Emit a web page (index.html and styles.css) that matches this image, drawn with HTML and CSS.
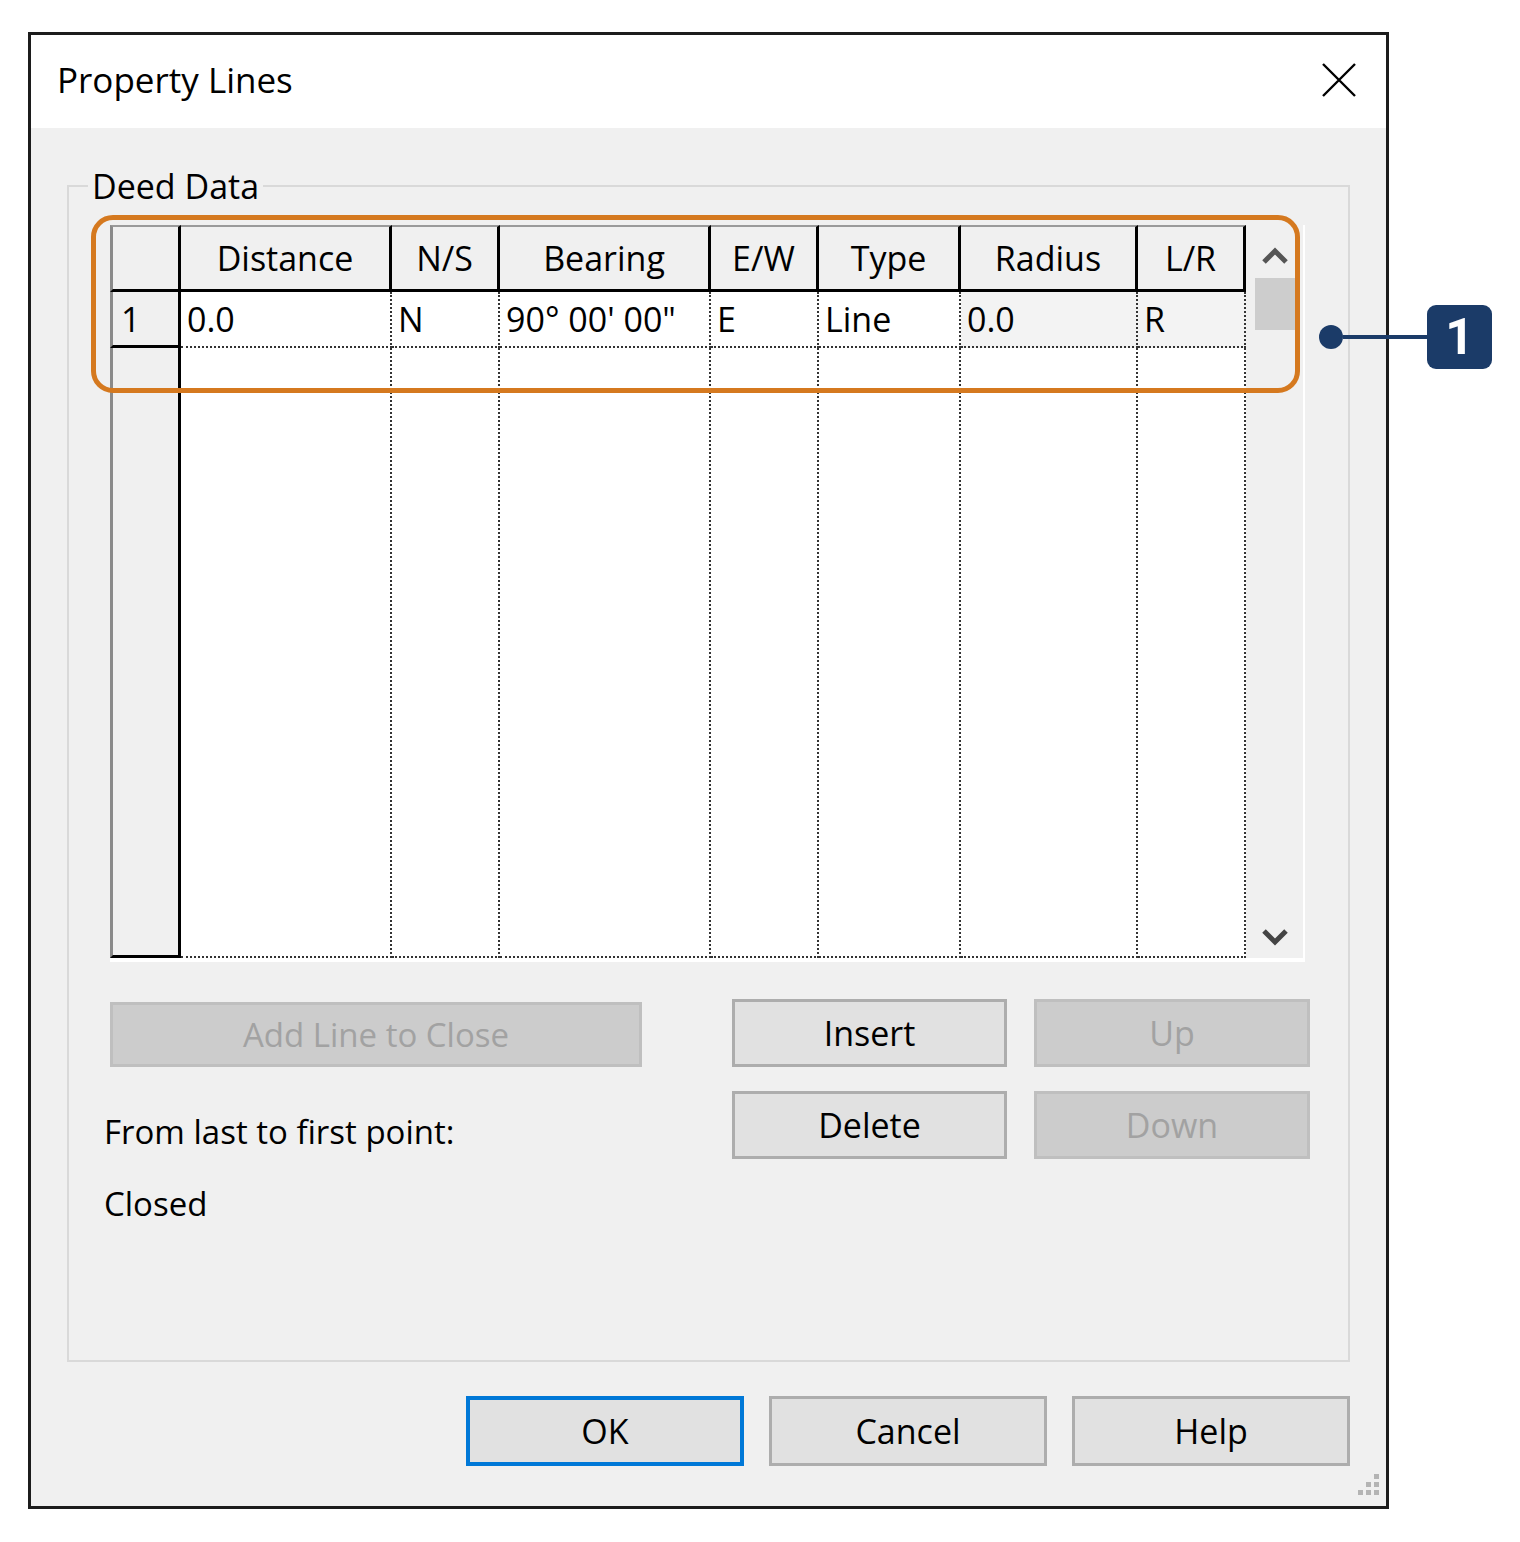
FILE: index.html
```html
<!DOCTYPE html>
<html lang="en">
<head>
    <meta charset="UTF-8">
    <meta name="viewport" content="width=device-width, initial-scale=1.0">
    <link rel="stylesheet" href="styles.css">
    <title>Property Lines</title>
</head>
<body>
    <div class="page">
        <div class="dialog">
            <div class="title-bar">
                <span class="title">Property Lines</span>
                <span class="close-btn">
                    <svg width="34" height="34" viewBox="0 0 34 34">
                        <path d="M1 1 L33 33 M33 1 L1 33" stroke="#000" stroke-width="2.4" fill="none"/>
                    </svg>
                </span>
            </div>
            <div class="dialog-body">
                <fieldset class="group">
                    <legend>Deed Data</legend>
                    <div class="grid">
                        <div class="corner"></div>
                        <div class="col-head">Distance</div>
                        <div class="col-head">N/S</div>
                        <div class="col-head">Bearing</div>
                        <div class="col-head">E/W</div>
                        <div class="col-head">Type</div>
                        <div class="col-head">Radius</div>
                        <div class="col-head">L/R</div>
                        <div class="scrollbar">
                            <svg class="arrow-up" width="28" height="18" viewBox="0 0 28 18">
                                <polyline points="3,15 14,4 25,15" stroke="#555" stroke-width="5" fill="none"/>
                            </svg>
                            <div class="thumb"></div>
                            <svg class="arrow-down" width="28" height="18" viewBox="0 0 28 18">
                                <polyline points="3,3 14,14 25,3" stroke="#444" stroke-width="5" fill="none"/>
                            </svg>
                        </div>

                        <div class="row-head">1</div>
                        <div class="cell">0.0</div>
                        <div class="cell">N</div>
                        <div class="cell">90° 00' 00"</div>
                        <div class="cell">E</div>
                        <div class="cell">Line</div>
                        <div class="cell readonly">0.0</div>
                        <div class="cell readonly">R</div>

                        <div class="row-head"></div>
                        <div class="cell"></div>
                        <div class="cell"></div>
                        <div class="cell"></div>
                        <div class="cell"></div>
                        <div class="cell"></div>
                        <div class="cell"></div>
                        <div class="cell"></div>
                    </div>

                    <div class="controls">
                        <div class="controls-left">
                            <button class="btn btn-disabled btn-add">Add Line to Close</button>
                            <div class="label label-first">From last to first point:</div>
                            <div class="label">Closed</div>
                        </div>
                        <div class="controls-right">
                            <button class="btn">Insert</button>
                            <button class="btn btn-disabled">Up</button>
                            <button class="btn">Delete</button>
                            <button class="btn btn-disabled">Down</button>
                        </div>
                    </div>
                </fieldset>

                <div class="footer">
                    <button class="btn btn-footer btn-default">OK</button>
                    <button class="btn btn-footer">Cancel</button>
                    <button class="btn btn-footer">Help</button>
                </div>
            </div>
            <svg class="grip" width="30" height="30" viewBox="0 0 30 30">
                <rect x="22" y="2" width="5" height="5" fill="#b4b4b4"/>
                <rect x="14" y="10" width="5" height="5" fill="#b4b4b4"/>
                <rect x="22" y="10" width="5" height="5" fill="#b4b4b4"/>
                <rect x="6" y="18" width="5" height="5" fill="#b4b4b4"/>
                <rect x="14" y="18" width="5" height="5" fill="#b4b4b4"/>
                <rect x="22" y="18" width="5" height="5" fill="#b4b4b4"/>
            </svg>
        </div>

        <!-- annotation overlay -->
        <div class="highlight"></div>
        <div class="callout">
            <span class="callout-dot"></span>
            <span class="callout-line"></span>
            <span class="callout-badge">1</span>
        </div>
    </div>
</body>
</html>
```

FILE: styles.css
```css
* {
    box-sizing: border-box;
}

body {
    font-family: "Open Sans", "Noto Sans", sans-serif;
    margin: 0;
    padding: 0;
    background-color: #fff;
    color: #000;
}

.page {
    position: relative;
    width: 1520px;
    height: 1542px;
    padding: 32px 0 0 28px;
}

.dialog {
    position: relative;
    width: 1361px;
    height: 1477px;
    border: 3px solid #1c1c1c;
    display: flex;
    flex-direction: column;
    background-color: #f0f0f0;
}

.title-bar {
    height: 93px;
    background-color: #fff;
    display: flex;
    justify-content: space-between;
    align-items: center;
    padding: 0 30px 0 26px;
}

.title {
    font-size: 35px;
    margin-top: -4px;
}

.close-btn {
    display: flex;
    margin-top: -4px;
}

.dialog-body {
    flex: 1;
    padding: 38px 36px 0 36px;
}

/* group box */
.group {
    margin: 0;
    border: 2px solid #d9d9d9;
    padding: 19px 0 136px 41px;
}

.group legend {
    font-size: 34px;
    line-height: 40px;
    padding: 0 4px;
    margin-left: -22px;
}

/* data grid */
.grid {
    display: grid;
    grid-template-columns: 71px 211px 108px 211px 108px 142px 177px 108px 59px;
    grid-template-rows: 67px 56px 1fr;
    width: 1195px;
    height: 737px;
    font-size: 34px;
    border-bottom: 4px solid #fff;
}

.corner,
.col-head {
    background-color: #f0f0f0;
    border-top: 2px solid #9a9a9a;
    border-right: 3px solid #000;
    border-bottom: 3px solid #000;
}

.corner {
    border-left: 3px solid #8a8a8a;
}

.col-head {
    display: flex;
    justify-content: center;
    align-items: center;
}

.row-head {
    background-color: #f0f0f0;
    border-left: 3px solid #8a8a8a;
    border-right: 3px solid #000;
    border-bottom: 3px solid #000;
    padding: 4px 0 0 8px;
    line-height: 46px;
}

.cell {
    background-color: #fff;
    border-right: 2px dotted #333;
    border-bottom: 2px dotted #333;
    padding: 4px 0 0 6px;
    line-height: 46px;
    white-space: nowrap;
}

.cell.readonly {
    background-color: #f3f3f3;
}

.scrollbar {
    grid-column: 9;
    grid-row: 1 / 4;
    background-color: #f0f0f0;
    border-right: 2px solid #fff;
    display: flex;
    flex-direction: column;
    align-items: center;
    padding: 22px 0 12px;
}

.thumb {
    width: 40px;
    height: 52px;
    margin-top: 13px;
    background-color: #cdcdcd;
}

.arrow-down {
    margin-top: auto;
}

/* buttons under the grid */
.controls {
    display: flex;
    margin-top: 37px;
    gap: 90px;
}

.controls-left {
    width: 532px;
    padding-top: 3px;
}

.btn {
    font-family: "Open Sans", "Noto Sans", sans-serif;
    font-size: 34px;
    color: #000;
    background-color: #e1e1e1;
    border: 3px solid #adadad;
    padding: 0;
    cursor: pointer;
}

.btn-disabled {
    color: #a2a2a2;
    background-color: #cccccc;
    border: 3px solid #bfbfbf;
}

.btn-add {
    width: 532px;
    height: 65px;
    font-size: 33px;
}

.label {
    font-size: 33px;
    line-height: 40px;
    margin-left: -6px;
}

.label-first {
    margin-top: 45px;
    margin-bottom: 32px;
}

.controls-right {
    display: grid;
    grid-template-columns: 275px 276px;
    grid-auto-rows: 68px;
    column-gap: 27px;
    row-gap: 24px;
}

/* footer buttons */
.footer {
    display: flex;
    justify-content: flex-end;
    gap: 25px;
    margin-top: 34px;
}

.btn-footer {
    width: 278px;
    height: 70px;
}

.btn-default {
    border: 4px solid #0078d7;
}

.grip {
    position: absolute;
    right: 4px;
    bottom: 4px;
}

/* annotation */
.highlight {
    position: absolute;
    left: 91px;
    top: 215px;
    width: 1209px;
    height: 178px;
    border: 5px solid #d5791f;
    border-radius: 22px;
}

.callout {
    position: absolute;
    left: 1319px;
    top: 305px;
    display: flex;
    align-items: center;
}

.callout-dot {
    width: 24px;
    height: 24px;
    border-radius: 50%;
    background-color: #1b3b68;
}

.callout-line {
    width: 84px;
    height: 4px;
    background-color: #1b3b68;
}

.callout-badge {
    width: 65px;
    height: 64px;
    border-radius: 9px;
    background-color: #1b3b68;
    color: #fff;
    font-family: Roboto, "Liberation Sans", sans-serif;
    font-weight: 700;
    font-size: 50px;
    display: flex;
    justify-content: center;
    align-items: center;
}
```
